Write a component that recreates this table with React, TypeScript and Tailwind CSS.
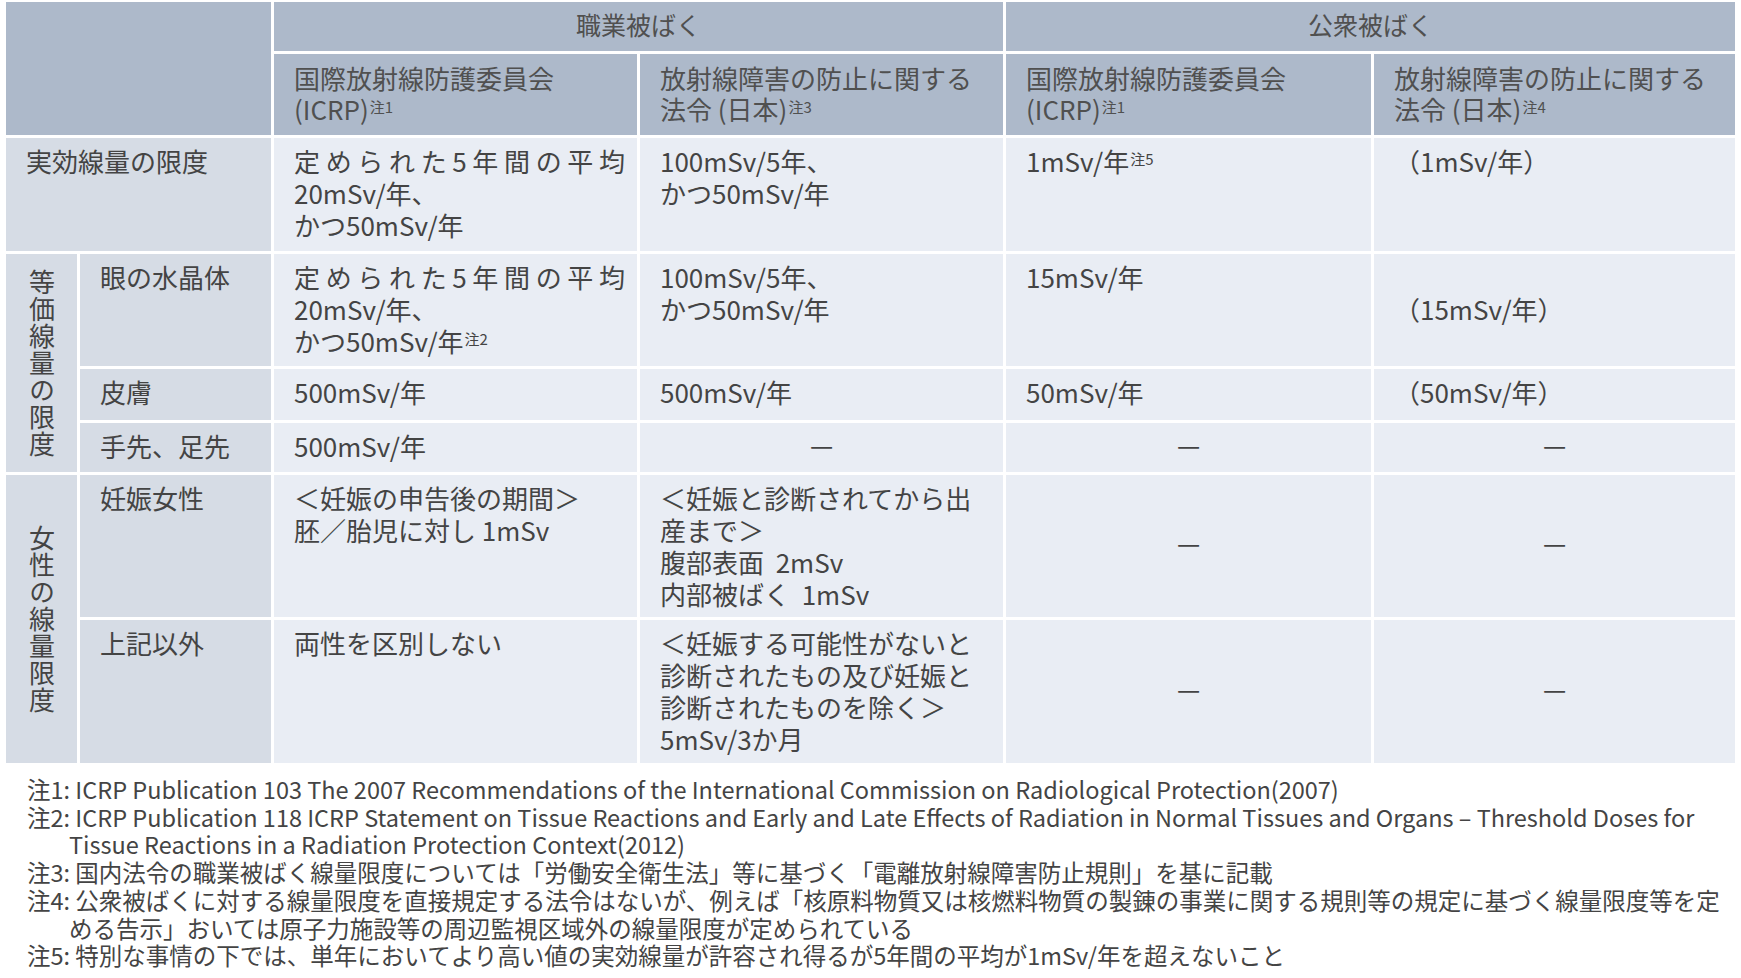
import React from "react";

const head = "bg-[#adb9ca] text-[#505050]";
const label = "bg-[#d6dce5] text-[#444]";
const body = "bg-[#e9edf4] text-[#444]";

function Sup({ children }: { children: React.ReactNode }) {
  return <sup className="text-[15px] ml-[1px]">{children}</sup>;
}

function Cell({ className = "", children }: { className?: string; children?: React.ReactNode }) {
  return <div className={`${body} pl-[20px] pr-[12px] pt-[7px] ${className}`}>{children}</div>;
}

function Dash() {
  return <div className={`${body} flex items-center justify-center pb-[8px]`}>—</div>;
}

function Vertical({ text, className = "" }: { text: string; className?: string }) {
  return (
    <div className={`${label} flex items-center justify-center ${className}`}>
      <span className="[writing-mode:vertical-rl] [text-orientation:upright] leading-[28px] tracking-[1px]">{text}</span>
    </div>
  );
}

const notes: { n: string; lines: string[] }[] = [
  { n: "注1:", lines: ["ICRP Publication 103 The 2007 Recommendations of the International Commission on Radiological Protection(2007)"] },
  {
    n: "注2:",
    lines: [
      "ICRP Publication 118 ICRP Statement on Tissue Reactions and Early and Late Effects of Radiation in Normal Tissues and Organs – Threshold Doses for",
      "Tissue Reactions in a Radiation Protection Context(2012)",
    ],
  },
  { n: "注3:", lines: ["国内法令の職業被ばく線量限度については「労働安全衛生法」等に基づく「電離放射線障害防止規則」を基に記載"] },
  {
    n: "注4:",
    lines: [
      "公衆被ばくに対する線量限度を直接規定する法令はないが、例えば「核原料物質又は核燃料物質の製錬の事業に関する規則等の規定に基づく線量限度等を定",
      "める告示」おいては原子力施設等の周辺監視区域外の線量限度が定められている",
    ],
  },
  { n: "注5:", lines: ["特別な事情の下では、単年においてより高い値の実効線量が許容され得るが5年間の平均が1mSv/年を超えないこと"] },
];

export default function App() {
  return (
    <div className="w-[1741px] h-[978px] bg-white overflow-hidden [font-family:'Noto_Sans_CJK_JP','Noto_Sans',sans-serif] text-[26px] leading-[32px]">
      <div className="ml-[6px] mt-[2px] w-[1729px] grid grid-cols-[71px_191px_363px_363px_365px_361px] grid-rows-[49px_81px_113px_112px_51px_49px_142px_143px] gap-[3px] bg-white">
        {/* header */}
        <div className={`${head} col-span-2 row-span-2`} />
        <div className={`${head} col-span-2 flex items-center justify-center pb-[6px] text-[25px]`}>職業被ばく</div>
        <div className={`${head} col-span-2 flex items-center justify-center pb-[6px] text-[25px]`}>公衆被ばく</div>
        <div className={`${head} pl-[20px] pt-[8px] leading-[31px]`}>
          <div>国際放射線防護委員会</div>
          <div>(ICRP)<Sup>注1</Sup></div>
        </div>
        <div className={`${head} pl-[20px] pt-[8px] leading-[31px]`}>
          <div>放射線障害の防止に関する</div>
          <div>法令 (日本)<Sup>注3</Sup></div>
        </div>
        <div className={`${head} pl-[20px] pt-[8px] leading-[31px]`}>
          <div>国際放射線防護委員会</div>
          <div>(ICRP)<Sup>注1</Sup></div>
        </div>
        <div className={`${head} pl-[20px] pt-[8px] leading-[31px]`}>
          <div>放射線障害の防止に関する</div>
          <div>法令 (日本)<Sup>注4</Sup></div>
        </div>

        {/* 実効線量 */}
        <div className={`${label} col-span-2 pl-[20px] pt-[7px]`}>実効線量の限度</div>
        <Cell>
          <div className="[text-align-last:justify]">定められた5年間の平均</div>
          <div>20mSv/年、</div>
          <div>かつ50mSv/年</div>
        </Cell>
        <Cell>
          <div>100mSv/5年、</div>
          <div>かつ50mSv/年</div>
        </Cell>
        <Cell>
          1mSv/年<Sup>注5</Sup>
        </Cell>
        <Cell className="pl-[14px]">（1mSv/年）</Cell>

        {/* 等価線量 */}
        <Vertical text="等価線量の限度" className="row-span-3" />
        <div className={`${label} pl-[20px] pt-[7px]`}>眼の水晶体</div>
        <Cell>
          <div className="[text-align-last:justify]">定められた5年間の平均</div>
          <div>20mSv/年、</div>
          <div>
            かつ50mSv/年<Sup>注2</Sup>
          </div>
        </Cell>
        <Cell>
          <div>100mSv/5年、</div>
          <div>かつ50mSv/年</div>
        </Cell>
        <Cell>15mSv/年</Cell>
        <Cell>
          <div>&nbsp;</div>
          <div>（15mSv/年）</div>
        </Cell>

        <div className={`${label} pl-[20px] pt-[7px]`}>皮膚</div>
        <Cell>500mSv/年</Cell>
        <Cell>500mSv/年</Cell>
        <Cell>50mSv/年</Cell>
        <Cell>（50mSv/年）</Cell>

        <div className={`${label} pl-[20px] pt-[7px]`}>手先、足先</div>
        <Cell>500mSv/年</Cell>
        <Dash />
        <Dash />
        <Dash />

        {/* 女性 */}
        <Vertical text="女性の線量限度" className="row-span-2" />
        <div className={`${label} pl-[20px] pt-[7px]`}>妊娠女性</div>
        <Cell>
          <div>＜妊娠の申告後の期間＞</div>
          <div>胚／胎児に対し 1mSv</div>
        </Cell>
        <Cell>
          <div>＜妊娠と診断されてから出</div>
          <div>産まで＞</div>
          <div>腹部表面&nbsp;&nbsp;2mSv</div>
          <div>内部被ばく&nbsp;&nbsp;1mSv</div>
        </Cell>
        <Dash />
        <Dash />

        <div className={`${label} pl-[20px] pt-[7px]`}>上記以外</div>
        <Cell>両性を区別しない</Cell>
        <Cell>
          <div>＜妊娠する可能性がないと</div>
          <div>診断されたもの及び妊娠と</div>
          <div>診断されたものを除く＞</div>
          <div>5mSv/3か月</div>
        </Cell>
        <Dash />
        <Dash />
      </div>

      {/* notes */}
      <div className="mt-[13px] pl-[27px] text-[23.5px] leading-[27.7px] text-[#444] whitespace-nowrap">
        {notes.map((note) => (
          <div key={note.n}>
            {note.lines.map((l, i) => (
              <div key={l} className={i === 0 ? "" : "pl-[42px]"}>
                {i === 0 ? `${note.n} ${l}` : l}
              </div>
            ))}
          </div>
        ))}
      </div>
    </div>
  );
}
